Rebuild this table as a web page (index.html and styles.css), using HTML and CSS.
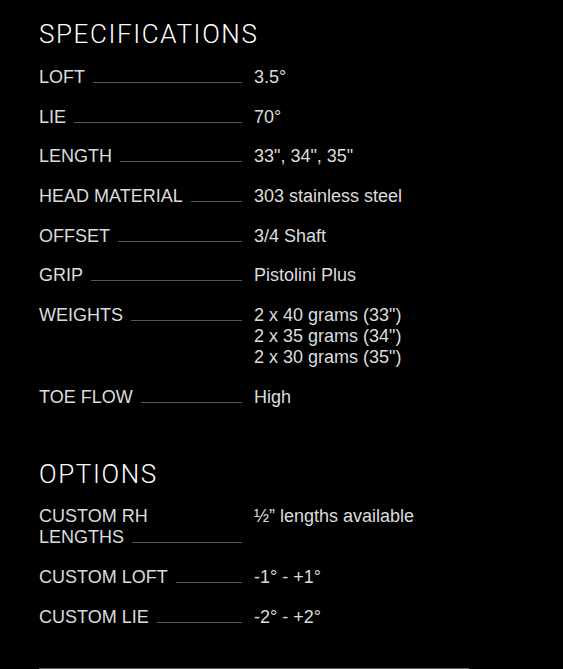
FILE: index.html
```html
<!DOCTYPE html>
<html lang="en">
<head>
<meta charset="utf-8">
<title>Specifications</title>
<link rel="stylesheet" href="styles.css">
</head>
<body>
<main class="specs">
  <section class="group">
    <h2 class="title">SPECIFICATIONS</h2>
    <dl class="list">
      <div class="row"><dt class="label"><span class="name">LOFT</span><span class="leader"></span></dt><dd class="value">3.5°</dd></div>
      <div class="row"><dt class="label"><span class="name">LIE</span><span class="leader"></span></dt><dd class="value">70°</dd></div>
      <div class="row"><dt class="label"><span class="name">LENGTH</span><span class="leader"></span></dt><dd class="value">33", 34", 35"</dd></div>
      <div class="row"><dt class="label"><span class="name">HEAD MATERIAL</span><span class="leader"></span></dt><dd class="value">303 stainless steel</dd></div>
      <div class="row"><dt class="label"><span class="name">OFFSET</span><span class="leader"></span></dt><dd class="value">3/4 Shaft</dd></div>
      <div class="row"><dt class="label"><span class="name">GRIP</span><span class="leader"></span></dt><dd class="value">Pistolini Plus</dd></div>
      <div class="row"><dt class="label label-top"><span class="name">WEIGHTS</span><span class="leader"></span></dt><dd class="value">2 x 40 grams (33")<br>2 x 35 grams (34")<br>2 x 30 grams (35")</dd></div>
      <div class="row"><dt class="label"><span class="name">TOE FLOW</span><span class="leader"></span></dt><dd class="value">High</dd></div>
    </dl>
  </section>
  <section class="group group-options">
    <h2 class="title">OPTIONS</h2>
    <dl class="list">
      <div class="row"><dt class="label"><span class="name">CUSTOM RH</span><span class="break"></span><span class="name">LENGTHS</span><span class="leader"></span></dt><dd class="value">½” lengths available</dd></div>
      <div class="row"><dt class="label"><span class="name">CUSTOM LOFT</span><span class="leader"></span></dt><dd class="value">-1° - +1°</dd></div>
      <div class="row"><dt class="label"><span class="name">CUSTOM LIE</span><span class="leader"></span></dt><dd class="value">-2° - +2°</dd></div>
    </dl>
  </section>
  <div class="rule"></div>
</main>
</body>
</html>
```

FILE: styles.css
```css
html, body {
  margin: 0;
  padding: 0;
  background: #000;
}
body {
  font-family: "Liberation Sans", Arial, sans-serif;
  color: #dcdcdc;
}
.specs {
  width: 430px;
  padding: 19px 0 0 39px;
}
.title {
  margin: 0;
  font-family: Roboto, "Liberation Sans", sans-serif;
  font-weight: 300;
  font-size: 26px;
  line-height: 30px;
  color: #fff;
  letter-spacing: 1.6px;
}
.list {
  margin: 17.8px 0 0;
  display: flex;
  flex-direction: column;
  gap: 18.73px;
  font-size: 18px;
  line-height: 21px;
}
.row {
  display: flex;
  gap: 12px;
}
.label {
  width: 203px;
  flex: none;
  display: flex;
  flex-wrap: wrap;
  align-items: last baseline;
  column-gap: 8px;
  row-gap: 0;
}
.label-top {
  align-items: first baseline;
}
.name {
  flex: none;
}
.break {
  flex-basis: 100%;
  height: 0;
}
.leader {
  flex: 1;
  border-bottom: 1px solid #585858;
}
.value {
  margin: 0;
}
.group-options {
  margin-top: 50.7px;
}
.rule {
  margin-top: 40px;
  border-top: 1px solid #5c5c5c;
}
```
